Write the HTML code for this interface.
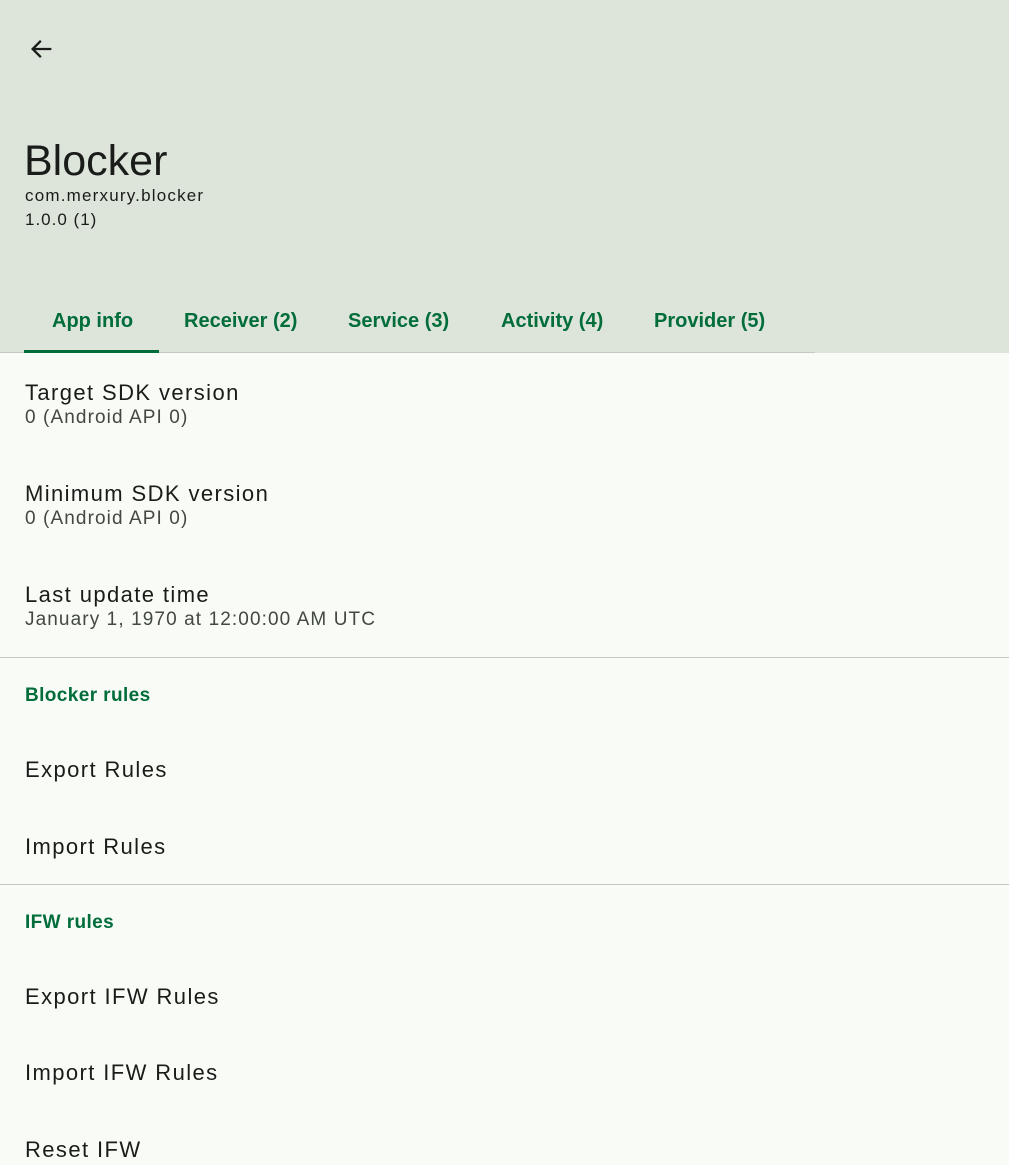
<!DOCTYPE html>
<html><head><style>
*{margin:0;padding:0;box-sizing:border-box}
body{width:1009px;height:1165px;background:#f9fbf6;font-family:"Liberation Sans",sans-serif;position:relative;overflow:hidden;color:#1a1c19}
.hdr{position:absolute;left:0;top:0;width:1009px;height:353px;background:#dde4da}
.a{position:absolute;white-space:nowrap}
.tab{position:absolute;top:310px;font-size:20px;color:#006d3b;font-weight:bold}
.t{font-size:22px;color:#1a1c19;letter-spacing:1.4px}
.s{font-size:19px;color:#424940;letter-spacing:1.1px}
.h{font-size:19px;color:#006d3b;font-weight:bold;letter-spacing:0.4px}
.div{position:absolute;left:0;width:1009px;height:1px;background:#c4c8c0}
</style></head><body>
<div class="hdr"></div>
<svg class="a" style="left:28px;top:35px" width="28" height="28" viewBox="0 0 24 24"><path d="M20 12H4.5M11 5l-7 7 7 7" fill="none" stroke="#1a1c19" stroke-width="2"/></svg>
<div class="a" style="left:24px;top:137px;font-size:43px;color:#1a1c19">Blocker</div>
<div class="a" style="left:25px;top:186px;font-size:17px;color:#1a1c19;letter-spacing:1.2px">com.merxury.blocker</div>
<div class="a" style="left:25px;top:210px;font-size:17px;color:#1a1c19;letter-spacing:1px">1.0.0 (1)</div>
<div class="tab" style="left:52px">App info</div>
<div class="tab" style="left:184px">Receiver (2)</div>
<div class="tab" style="left:348px">Service (3)</div>
<div class="tab" style="left:501px">Activity (4)</div>
<div class="tab" style="left:654px">Provider (5)</div>
<div class="a" style="left:0;top:352px;width:815px;height:1px;background:#c4c8c0"></div>
<div class="a" style="left:24px;top:350px;width:135px;height:3px;background:#006d3b"></div>
<div class="a t" style="left:25px;top:380px">Target SDK version</div>
<div class="a s" style="left:25px;top:407px">0 (Android API 0)</div>
<div class="a t" style="left:25px;top:481px">Minimum SDK version</div>
<div class="a s" style="left:25px;top:508px">0 (Android API 0)</div>
<div class="a t" style="left:25px;top:582px">Last update time</div>
<div class="a s" style="left:25px;top:609px">January 1, 1970 at 12:00:00 AM UTC</div>
<div class="div" style="top:657px"></div>
<div class="a h" style="left:25px;top:685px">Blocker rules</div>
<div class="a t" style="left:25px;top:757px">Export Rules</div>
<div class="a t" style="left:25px;top:834px">Import Rules</div>
<div class="div" style="top:884px"></div>
<div class="a h" style="left:25px;top:912px">IFW rules</div>
<div class="a t" style="left:25px;top:984px">Export IFW Rules</div>
<div class="a t" style="left:25px;top:1060px">Import IFW Rules</div>
<div class="a t" style="left:25px;top:1137px">Reset IFW</div>
</body></html>
